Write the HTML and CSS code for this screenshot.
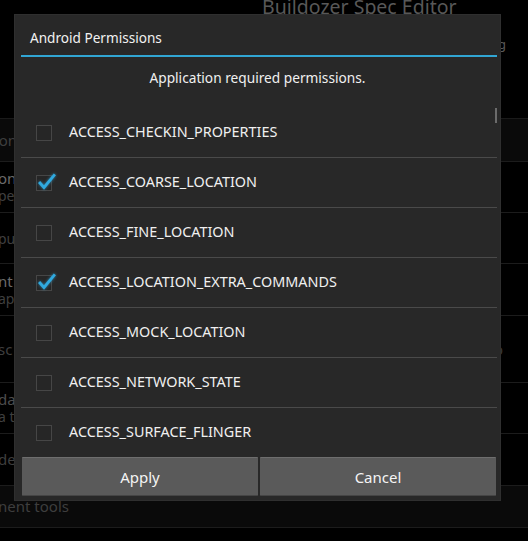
FILE: index.html
```html
<!DOCTYPE html>
<html lang="en">
<head>
<meta charset="utf-8">
<title>Android Permissions</title>
<link rel="stylesheet" href="styles.css">
</head>
<body>
<div class="app">
  <header class="app-header">
    <div class="app-title">Buildozer Spec Editor</div>
    <div class="app-sub"><span class="sub-end">Spec filing</span></div>
  </header>
  <div class="bg-row h43 hl"><div class="bg-left"><span class="bg-t dim">Application</span></div></div>
  <div class="bg-row h51"><div class="bg-left"><span class="bg-t strong">ons</span><span class="bg-d">pe</span></div></div>
  <div class="bg-row h51"><div class="bg-left"><span class="bg-d">pu</span></div></div>
  <div class="bg-row h52"><div class="bg-left"><span class="bg-t strong">nt</span><span class="bg-d">app</span></div></div>
  <div class="bg-row h67"><div class="bg-left"><span class="bg-t dim">sc</span></div><span class="bg-right">o</span></div>
  <div class="bg-row h51"><div class="bg-left"><span class="bg-t">da</span><span class="bg-d">a t</span></div></div>
  <div class="bg-row h52"><div class="bg-left"><span class="bg-t dim">de</span></div></div>
  <div class="bg-row h42 hl"><div class="bg-left"><span class="bg-t dim">nent tools</span></div></div>
</div>

<div class="dialog">
  <div class="dlg-title">Android Permissions</div>
  <div class="dlg-rule"></div>
  <div class="dlg-msg">Application required permissions.</div>
  <div class="perm-list">
    <div class="perm">
      <svg class="cb" width="20" height="20" viewBox="0 0 20 20"><rect x="1.5" y="2.5" width="15" height="15"/></svg>
      <span class="perm-name">ACCESS_CHECKIN_PROPERTIES</span>
    </div>
    <div class="perm">
      <svg class="cb" width="20" height="20" viewBox="0 0 20 20"><rect x="1.5" y="2.5" width="15" height="15"/><path class="tick" d="M5 10 L9 14.5 L19 2.5"/></svg>
      <span class="perm-name">ACCESS_COARSE_LOCATION</span>
    </div>
    <div class="perm">
      <svg class="cb" width="20" height="20" viewBox="0 0 20 20"><rect x="1.5" y="2.5" width="15" height="15"/></svg>
      <span class="perm-name">ACCESS_FINE_LOCATION</span>
    </div>
    <div class="perm">
      <svg class="cb" width="20" height="20" viewBox="0 0 20 20"><rect x="1.5" y="2.5" width="15" height="15"/><path class="tick" d="M5 10 L9 14.5 L19 2.5"/></svg>
      <span class="perm-name">ACCESS_LOCATION_EXTRA_COMMANDS</span>
    </div>
    <div class="perm">
      <svg class="cb" width="20" height="20" viewBox="0 0 20 20"><rect x="1.5" y="2.5" width="15" height="15"/></svg>
      <span class="perm-name">ACCESS_MOCK_LOCATION</span>
    </div>
    <div class="perm">
      <svg class="cb" width="20" height="20" viewBox="0 0 20 20"><rect x="1.5" y="2.5" width="15" height="15"/></svg>
      <span class="perm-name">ACCESS_NETWORK_STATE</span>
    </div>
    <div class="perm">
      <svg class="cb" width="20" height="20" viewBox="0 0 20 20"><rect x="1.5" y="2.5" width="15" height="15"/></svg>
      <span class="perm-name">ACCESS_SURFACE_FLINGER</span>
    </div>
    <div class="perm">
      <svg class="cb" width="20" height="20" viewBox="0 0 20 20"><rect x="1.5" y="2.5" width="15" height="15"/></svg>
      <span class="perm-name">ACCESS_WIFI_STATE</span>
    </div>
    <div class="scrollbar"></div>
  </div>
  <div class="dlg-buttons">
    <div class="btn">Apply</div>
    <div class="btn">Cancel</div>
  </div>
</div>
</body>
</html>
```

FILE: styles.css
```css
html, body {
  margin: 0;
  padding: 0;
  background: #000;
  width: 528px;
  height: 541px;
  overflow: hidden;
  font-family: "Noto Sans", "Open Sans", sans-serif;
}

.app {
  width: 528px;
  height: 541px;
  overflow: hidden;
}

.app-header {
  display: flex;
  flex-direction: column;
  height: 119px;
  box-sizing: border-box;
  border-bottom: 1px solid #1a1a1a;
}

.app-title {
  padding-left: 262px;
  margin-top: -3px;
  font-size: 19.5px;
  line-height: 20px;
  color: #585858;
  white-space: nowrap;
}

.app-sub {
  display: flex;
  justify-content: flex-end;
  padding-right: 22px;
  margin-top: 19px;
  font-size: 13px;
  line-height: 16px;
  color: #5a5a5a;
}

.bg-row {
  display: flex;
  justify-content: space-between;
  align-items: center;
  border-bottom: 1px solid #1c1c1c;
  box-sizing: border-box;
  overflow: hidden;
}

.hl { background: #0a0a0a; }
.h43 { height: 43px; }
.h51 { height: 51px; }
.h52 { height: 52px; }
.h67 { height: 67px; }
.h42 { height: 42px; }

.bg-left {
  display: flex;
  flex-direction: column;
  margin-left: -2px;
  white-space: nowrap;
}

.h43 .bg-left { margin-left: -62px; }

.bg-t {
  font-size: 15px;
  line-height: 17px;
  color: #4d4d4d;
}

.bg-t.strong {
  color: #6a6a6a;
}

.bg-t.dim {
  color: #3e3e3e;
}

.bg-d {
  font-size: 14px;
  line-height: 17px;
  color: #3f3f3f;
}

.bg-right {
  font-size: 14px;
  color: #3a3a3a;
  margin-right: 25px;
}

/* Dialog */
.dialog {
  position: absolute;
  left: 14px;
  top: 14px;
  width: 487px;
  height: 487px;
  box-sizing: border-box;
  background: #282828;
  border: 1px solid #2f2f2f;
  display: flex;
  flex-direction: column;
  color: #fff;
}

.dlg-title {
  padding: 13px 0 7px 15px;
  font-size: 13.6px;
  line-height: 20px;
  color: #f2f2f2;
}

.dlg-rule {
  height: 2px;
  margin: 0 3px 0 6px;
  background: #31a6d4;
}

.dlg-msg {
  height: 51px;
  box-sizing: border-box;
  padding-top: 11px;
  text-align: center;
  font-size: 13.7px;
  line-height: 20px;
  color: #f0f0f0;
}

.perm-list {
  position: relative;
  margin: 0 3px 0 6px;
  height: 349px;
  overflow: hidden;
}

.perm {
  display: flex;
  align-items: center;
  height: 50px;
  box-sizing: border-box;
  border-bottom: 1px solid #4a4a4a;
  padding-left: 14px;
}

.cb {
  flex: none;
  overflow: visible;
}

.cb rect {
  fill: #262626;
  stroke: #464646;
  stroke-width: 1;
}

.cb .tick {
  fill: none;
  stroke: #30a9df;
  stroke-width: 2.8;
  stroke-linecap: square;
  stroke-linejoin: miter;
  filter: drop-shadow(0 0 1.5px rgba(48, 169, 223, 0.7));
}

.perm-name {
  margin-left: 14px;
  padding-bottom: 2px;
  font-size: 14.4px;
  line-height: 20px;
  color: #f0f0f0;
  white-space: nowrap;
}

.scrollbar {
  position: absolute;
  right: 0;
  top: 0;
  width: 2px;
  height: 15px;
  background: #6b6b6b;
}

.dlg-buttons {
  display: flex;
  gap: 2px;
  height: 39px;
  margin: 0 4px 0 7px;
}

.btn {
  flex: 1;
  display: flex;
  align-items: center;
  justify-content: center;
  box-sizing: border-box;
  background: #5a5a5a;
  border-top: 1px solid #6e6e6e;
  border-bottom: 1px solid #454545;
  border-radius: 1px;
  font-size: 15px;
  color: #f4f4f4;
}
```
